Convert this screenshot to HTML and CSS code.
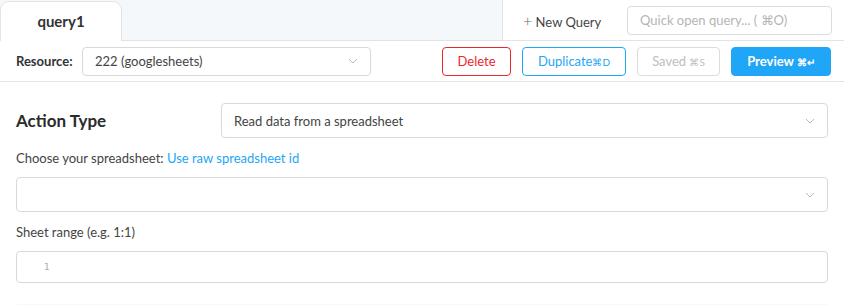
FILE: index.html
```html
<!DOCTYPE html>
<html lang="en">
  <head>
    <meta charset="UTF-8" />
    <title>query1</title>
    <link rel="stylesheet" href="styles.css">
  </head>
  <body>
    <div class="tabBar">
      <div class="tab">query1</div>
      <div class="tabSpace"></div>
      <div class="tabTools">
        <span class="newQuery"><span class="plus">+</span> New Query</span>
        <div class="quickOpen">Quick open query... ( ⌘O)</div>
      </div>
    </div>

    <div class="resourceRow">
      <span class="resourceLabel">Resource:</span>
      <div class="select resourceSelect">
        <span>222 (googlesheets)</span>
        <svg class="chevron" width="10" height="6" viewBox="0 0 10 6"><path d="M1 1 L5 5 L9 1" fill="none" stroke="#bbb" stroke-width="1"/></svg>
      </div>
      <div class="actions">
        <button class="btn btnDelete">Delete</button>
        <button class="btn btnDuplicate">Duplicate<span class="kbd">⌘D</span></button>
        <button class="btn btnSaved">Saved <span class="kbd">⌘S</span></button>
        <button class="btn btnPreview">Preview <span class="kbd">⌘↵</span></button>
      </div>
    </div>

    <div class="editor">
      <div class="actionRow">
        <h3 class="actionTitle">Action Type</h3>
        <div class="select">
          <span>Read data from a spreadsheet</span>
          <svg class="chevron" width="10" height="6" viewBox="0 0 10 6"><path d="M1 1 L5 5 L9 1" fill="none" stroke="#bbb" stroke-width="1"/></svg>
        </div>
      </div>

      <label class="fieldLabel">Choose your spreadsheet: <a href="#">Use raw spreadsheet id</a></label>
      <div class="select fieldSelect">
        <span></span>
        <svg class="chevron" width="10" height="6" viewBox="0 0 10 6"><path d="M1 1 L5 5 L9 1" fill="none" stroke="#bbb" stroke-width="1"/></svg>
      </div>

      <label class="fieldLabel">Sheet range (e.g. 1:1)</label>
      <div class="codeInput">
        <span class="lineNo">1</span>
      </div>

      <div class="nextBlock"></div>
    </div>
  </body>
</html>
```

FILE: styles.css
```css
body {
  margin: 0;
  font-family: "Lato", "Open Sans", sans-serif;
  color: #333;
  background-color: #fff;
  overflow: hidden;
}

.tabBar {
  height: 40px;
  display: flex;
  background-color: #f5f8fb;
  border-bottom: 1px solid #e3e3e3;
}
.tab {
  width: 122px;
  height: 40px;
  margin-top: 1px;
  margin-bottom: -1px;
  background-color: #fff;
  border: 1px solid #e3e3e3;
  border-bottom: none;
  border-radius: 9px 9px 0 0;
  box-sizing: border-box;
  display: flex;
  justify-content: center;
  align-items: center;
  font-size: 15px;
  font-weight: 700;
  padding-bottom: 2px;
}
.tabSpace {
  flex: 1;
}
.tabTools {
  width: 342px;
  background-color: #fff;
  border-left: 1px solid #e3e3e3;
  display: flex;
  align-items: center;
  padding-left: 20px;
  box-sizing: border-box;
}
.newQuery {
  font-size: 13px;
  color: #444;
  width: 104px;
}
.plus {
  font-size: 16px;
  color: #666;
  font-weight: 300;
}
.quickOpen {
  width: 205px;
  height: 29px;
  box-sizing: border-box;
  border: 1px solid #dcdcdc;
  border-radius: 4px;
  padding-left: 12px;
  display: flex;
  align-items: center;
  font-size: 13px;
  color: #b5b5b5;
}

.resourceRow {
  height: 40px;
  display: flex;
  align-items: center;
  padding: 0 13px 0 16px;
  border-bottom: 1px solid #e3e3e3;
}
.resourceLabel {
  font-size: 13px;
  font-weight: 700;
  width: 66px;
}
.select {
  flex: 1;
  height: 35px;
  box-sizing: border-box;
  border: 1px solid #d9d9d9;
  border-radius: 4px;
  display: flex;
  align-items: center;
  justify-content: space-between;
  padding: 0 12px 0 12px;
  font-size: 13px;
  color: #444;
}
.resourceSelect {
  flex: none;
  width: 289px;
  height: 29px;
  padding-left: 12px;
}
.fieldSelect {
  flex: none;
}
.chevron {
  display: block;
}
.actions {
  margin-left: auto;
  display: flex;
  gap: 11px;
}
.btn {
  height: 29px;
  box-sizing: border-box;
  border-radius: 4px;
  background-color: #fff;
  font-family: inherit;
  font-size: 13px;
  padding: 0;
  cursor: pointer;
}
.kbd {
  font-size: 10px;
}
.btnDelete {
  width: 69px;
  border: 1px solid #e9282d;
  color: #e9282d;
}
.btnDuplicate {
  width: 104px;
  border: 1px solid #1fa6f6;
  color: #1fa6f6;
}
.btnSaved {
  width: 83px;
  border: 1px solid #dcdcdc;
  color: #bdbdbd;
}
.btnPreview {
  width: 100px;
  border: 1px solid #1fa6f6;
  background-color: #1fa6f6;
  color: #fff;
  font-weight: 700;
}

.editor {
  padding: 21px 16px 0 16px;
  display: flex;
  flex-direction: column;
}
.actionRow {
  display: flex;
  align-items: center;
}
.actionTitle {
  width: 205px;
  margin: 0;
  font-size: 17px;
  font-weight: 700;
  color: #2b2b2b;
}
.fieldLabel {
  font-size: 13px;
  color: #444;
  margin: 12px 0 11px 0;
  line-height: 16px;
}
.fieldLabel a {
  color: #1fa6f6;
  text-decoration: none;
}
.codeInput {
  height: 32px;
  box-sizing: border-box;
  border: 1px solid #d9d9d9;
  border-radius: 4px;
  display: flex;
  align-items: center;
  padding-left: 27px;
}
.lineNo {
  font-family: "DejaVu Sans Mono", monospace;
  font-size: 9px;
  color: #aaa;
}
.nextBlock {
  margin-top: 21px;
  height: 2px;
  background-color: #f3f9fd;
  border-radius: 4px 4px 0 0;
}
```
